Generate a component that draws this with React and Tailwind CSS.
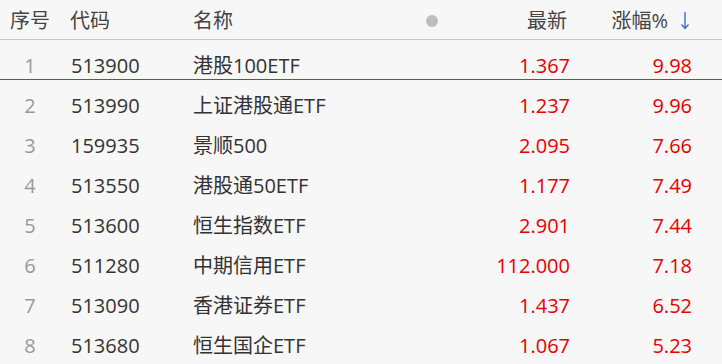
import React from 'react';

const rows = [
  { no: 1, code: '513900', name: '港股100ETF', price: '1.367', pct: '9.98' },
  { no: 2, code: '513990', name: '上证港股通ETF', price: '1.237', pct: '9.96' },
  { no: 3, code: '159935', name: '景顺500', price: '2.095', pct: '7.66' },
  { no: 4, code: '513550', name: '港股通50ETF', price: '1.177', pct: '7.49' },
  { no: 5, code: '513600', name: '恒生指数ETF', price: '2.901', pct: '7.44' },
  { no: 6, code: '511280', name: '中期信用ETF', price: '112.000', pct: '7.18' },
  { no: 7, code: '513090', name: '香港证券ETF', price: '1.437', pct: '6.52' },
  { no: 8, code: '513680', name: '恒生国企ETF', price: '1.067', pct: '5.23' },
];

function Row({ r, selected }) {
  return (
    <div className={selected ? 'flex h-10 pt-3 leading-[27px] border-b border-[#d03000]' : 'flex h-10 pt-3 leading-[28px]'}>
      <div className="w-[60px] text-center text-[#999]">{r.no}</div>
      <div className="w-[133px] pl-[11px]">{r.code}</div>
      <div className="w-[232px]">{r.name}</div>
      <div className="w-[14px]"></div>
      <div className="w-[131px] text-right text-[#e60000]">{r.price}</div>
      <div className="w-[122px] text-right text-[#e60000]">{r.pct}</div>
    </div>
  );
}

export default function App() {
  return (
    <div
      className="w-[722px] h-[364px] overflow-hidden bg-[#f7f7f7] text-[20px] text-[#333]"
      style={{ fontFamily: '"Open Sans", "Noto Sans CJK SC", sans-serif' }}
    >
      {/* header */}
      <div className="flex h-10 items-center border-b border-[#c8c8c8] pt-[2px] text-[#444]">
        <div className="w-[60px] text-center">序号</div>
        <div className="w-[133px] pl-[10px]">代码</div>
        <div className="w-[232px]">名称</div>
        <div className="w-[14px] flex items-center justify-center">
          <span className="block w-3 h-3 rounded-full bg-[#bdbdbd]"></span>
        </div>
        <div className="w-[128px] text-right">最新</div>
        <div className="w-[123px] flex justify-end items-center gap-[12px]">
          <span>涨幅%</span>
          <svg width="10" height="19" viewBox="0 0 10 19" className="shrink-0">
            <path d="M5 1 V17.5 M1.5 13.5 L5 17.5 L8.5 13.5" fill="none" stroke="#3a6fc4" strokeWidth="1.4" />
          </svg>
        </div>
      </div>

      {rows.map((r) => (
        <Row key={r.no} r={r} selected={r.no === 1} />
      ))}
    </div>
  );
}
